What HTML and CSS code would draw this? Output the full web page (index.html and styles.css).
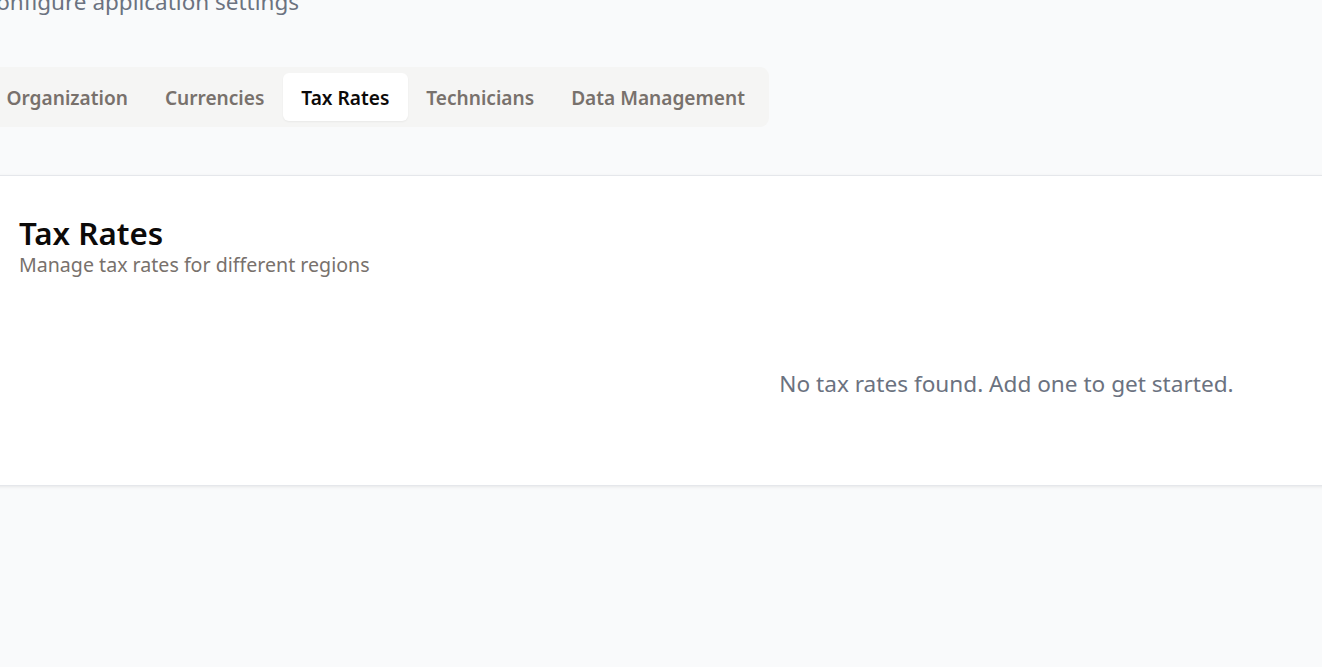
FILE: index.html
```html
<!DOCTYPE html>
<html lang="en">
<head>
<meta charset="utf-8">
<title>Settings</title>
<link rel="stylesheet" href="styles.css">
</head>
<body>
<div class="viewport">
  <main class="page">
    <p class="page-subtitle">Configure application settings</p>
    <nav class="tabs">
      <button class="tab">Organization</button>
      <button class="tab">Currencies</button>
      <button class="tab active">Tax Rates</button>
      <button class="tab">Technicians</button>
      <button class="tab">Data Management</button>
    </nav>
    <section class="card">
      <header class="card-header">
        <h2 class="card-title">Tax Rates</h2>
        <p class="card-desc">Manage tax rates for different regions</p>
      </header>
      <div class="empty">No tax rates found. Add one to get started.</div>
    </section>
  </main>
</div>
</body>
</html>
```
FILE: styles.css
```css
* { box-sizing: border-box; }
html, body { margin: 0; padding: 0; }
body {
  background: #f9fafb;
  font-family: "Noto Sans", "Open Sans", sans-serif;
  overflow: hidden;
  height: 667px;
}
.viewport { overflow: hidden; width: 1322px; height: 667px; }
.page {
  margin-left: -18px;
  margin-top: -12px;
  width: 2049px;
}
.page-subtitle {
  margin: 0;
  font-size: 22.5px;
  line-height: 28px;
  color: #6b7280;
}
.tabs {
  margin-top: 51px;
  display: inline-flex;
  align-items: center;
  background: #f5f5f4;
  border-radius: 9px;
  padding: 6px;
  height: 60px;
}
.tab {
  font-family: inherit;
  border: 0;
  background: transparent;
  font-size: 19.1px;
  font-weight: 600;
  color: #78716c;
  padding: 2px 18.5px 0;
  height: 48px;
  border-radius: 6px;
  cursor: pointer;
}
.tab.active {
  background: #ffffff;
  color: #0c0a09;
  box-shadow: 0 1px 2px rgba(0,0,0,0.05);
}
.card {
  margin-top: 48px;
  background: #ffffff;
  border-top: 1px solid #e5e7eb;
  border-bottom: 1px solid #e5e7eb;
  box-shadow: 0 1px 3px rgba(0,0,0,0.08);
  height: 311px;
}
.card-header {
  padding: 39px 37px 0;
}
.card-title {
  margin: 0;
  font-size: 31.3px;
  line-height: 36px;
  font-weight: 600;
  color: #0c0a09;
}
.card-desc {
  margin: 0;
  font-size: 19.6px;
  line-height: 27px;
  color: #78716c;
}
.empty {
  margin-top: 92px;
  text-align: center;
  font-size: 22.6px;
  line-height: 28px;
  color: #6b7280;
}
```
